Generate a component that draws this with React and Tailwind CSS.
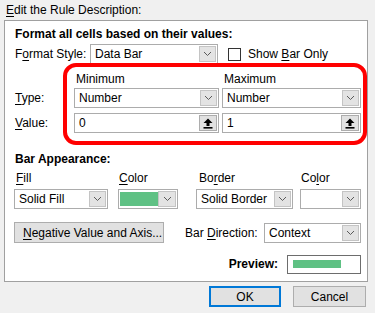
import React from "react";

const U = ({ children }) => <span className="underline underline-offset-2">{children}</span>;

function Chevron() {
  return (
    <svg width="9" height="6" viewBox="0 0 9 6" className="block">
      <path d="M1 1 L4.5 4.5 L8 1" fill="none" stroke="#5a5a5a" strokeWidth="1" />
    </svg>
  );
}

function Combo({ w, children, className = "" }) {
  return (
    <div
      className={`relative flex h-[20px] items-center border border-[#acacac] bg-white pl-[4px] ${className}`}
      style={{ width: w }}
    >
      <div className="flex-1 overflow-hidden whitespace-nowrap">{children}</div>
      <div className="mr-[1px] flex h-[16px] w-[17px] items-center justify-center border border-[#c4c4c4] bg-[#e3e3e3]">
        <Chevron />
      </div>
    </div>
  );
}

function RefInput({ w, value }) {
  return (
    <div className="flex h-[20px] items-center border border-[#acacac] bg-white pl-[4px]" style={{ width: w }}>
      <div className="flex-1">{value}</div>
      <div className="mr-[1px] flex h-[16px] w-[18px] items-center justify-center border border-[#adadad] bg-[#e1e1e1]">
        <svg width="10" height="11" viewBox="0 0 10 11" className="block">
          <path d="M5 0.5 L9.5 5 L6.5 5 L6.5 8 L3.5 8 L3.5 5 L0.5 5 Z" fill="#000" />
          <rect x="0.5" y="9" width="9" height="1.6" fill="#000" />
        </svg>
      </div>
    </div>
  );
}

export default function App() {
  return (
    <div
      className="h-[313px] w-[375px] overflow-hidden whitespace-nowrap bg-[#f0f0f0] text-[12px] leading-[16px] text-black"
      style={{ fontFamily: '"Liberation Sans", Arial, sans-serif' }}
    >
      {/* title */}
      <div className="flex h-[20px] items-center pl-[6px]">
        <span>
          <U>E</U>dit the Rule Description:
        </span>
      </div>

      {/* panel */}
      <div className="relative ml-[4px] h-[262px] w-[364px] border border-[#a0a0a0] bg-white pl-[10px]">
        <div className="mt-[5px] h-[16px] font-bold">Format all cells based on their values:</div>

        <div className="mt-[2px] flex h-[20px] items-center">
          <div className="w-[75px]">
            F<U>o</U>rmat Style:
          </div>
          <Combo w={128}>Data Bar</Combo>
          <div className="ml-[10px] h-[13px] w-[13px] border border-[#333] bg-white" />
          <div className="ml-[7px]">
            Show <U>B</U>ar Only
          </div>
        </div>

        {/* min / max */}
        <div className="mt-[7px] flex h-[16px]">
          <div className="w-[61px]" />
          <div className="w-[148px]">Minimum</div>
          <div>Maximum</div>
        </div>
        <div className="mt-[1px] flex h-[20px] items-center">
          <div className="w-[59px]">
            <U>T</U>ype:
          </div>
          <Combo w={145}>Number</Combo>
          <div className="w-[3px]" />
          <Combo w={139}>Number</Combo>
        </div>
        <div className="mt-[5px] flex h-[20px] items-center">
          <div className="w-[59px]">
            <U>V</U>alue:
          </div>
          <RefInput w={145} value="0" />
          <div className="w-[3px]" />
          <RefInput w={139} value="1" />
        </div>

        {/* bar appearance */}
        <div className="mt-[18px] h-[16px] font-bold">Bar Appearance:</div>
        <div className="mt-[3px] flex h-[16px]">
          <div className="w-[104px] pl-[1px]">
            <U>F</U>ill
          </div>
          <div className="w-[80px]">
            <U>C</U>olor
          </div>
          <div className="w-[102px]">
            Bo<U>r</U>der
          </div>
          <div>
            Co<U>l</U>or
          </div>
        </div>
        <div className="mt-[3px] flex h-[20px] items-center">
          <Combo w={94} className="-ml-[1px]">Solid Fill</Combo>
          <div className="w-[10px]" />
          <div className="flex h-[20px] w-[60px] items-center border border-[#acacac] bg-white pl-[1px]">
            <div className="h-[14px] w-[38px] bg-[#5fc184]" />
            <div className="flex-1" />
            <div className="mr-[1px] flex h-[16px] w-[18px] items-center justify-center border border-[#c4c4c4] bg-[#e3e3e3]">
              <Chevron />
            </div>
          </div>
          <div className="w-[18px]" />
          <Combo w={97}>Solid Border</Combo>
          <div className="w-[7px]" />
          <Combo w={61}></Combo>
        </div>

        <div className="mt-[13px] flex h-[21px] items-center">
          <div className="-ml-[1px] flex h-[21px] w-[150px] items-center border border-[#adadad] bg-[#e1e1e1] pl-[8px]">
            <span className="whitespace-nowrap">
              <U>N</U>egative Value and Axis...
            </span>
          </div>
          <div className="w-[21px]" />
          <div className="w-[79px]">
            Bar <U>D</U>irection:
          </div>
          <Combo w={97}>Context</Combo>
        </div>

        <div className="mt-[12px] flex h-[18px] items-center justify-end pr-[6px]">
          <div className="mr-[9px] font-bold">Preview:</div>
          <div className="flex h-[19px] w-[74px] items-center border border-[#6d6d6d] bg-white pl-[5px]">
            <div className="h-[8px] w-[48px] bg-[#5fc184]" />
          </div>
        </div>

        {/* highlight ring */}
        <div className="absolute left-[58px] top-[42px] h-[82px] w-[304px] rounded-[13px] border-[4px] border-[#ff0000]" />
      </div>

      {/* buttons */}
      <div className="mt-[4px] flex h-[21px] pl-[209px]">
        <div className="flex h-[21px] w-[72px] items-center justify-center border-2 border-[#0078d7] bg-[#e1e1e1]">OK</div>
        <div className="w-[12px]" />
        <div className="flex h-[21px] w-[73px] items-center justify-center border border-[#adadad] bg-[#e1e1e1]">Cancel</div>
      </div>
    </div>
  );
}
